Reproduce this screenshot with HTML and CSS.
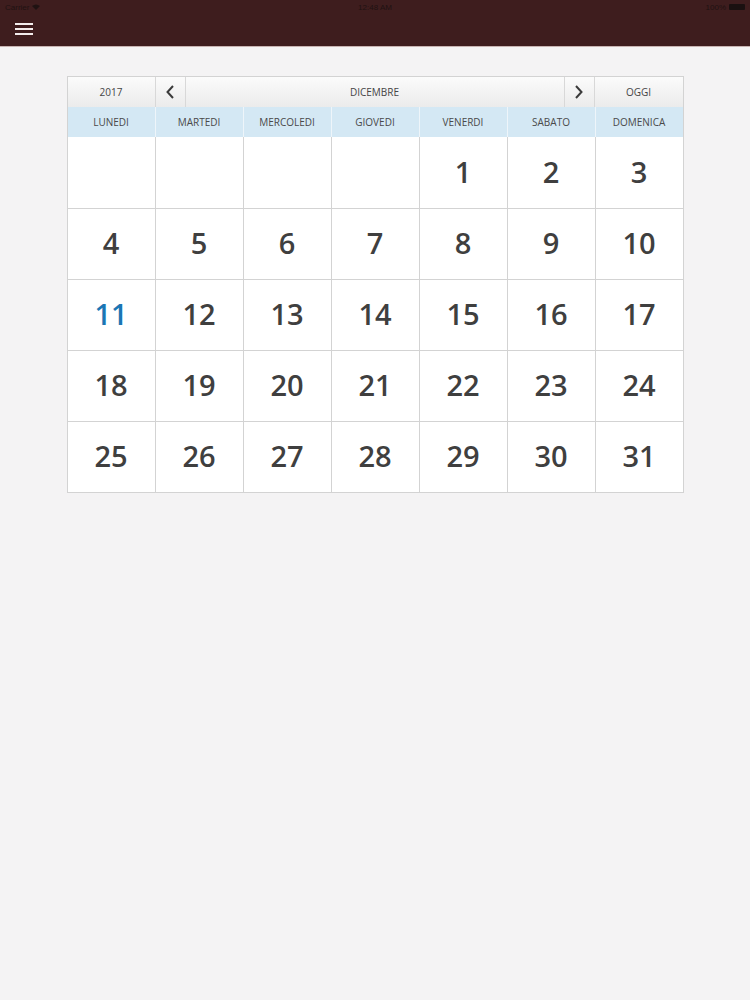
FILE: index.html
```html
<!DOCTYPE html>
<html lang="it">
<head>
<meta charset="utf-8">
<title>Calendario</title>
<link rel="stylesheet" href="styles.css">
</head>
<body>
<header class="topbar">
  <div class="status">
    <span class="carrier">Carrier <svg class="wifi" width="8" height="6" viewBox="0 0 8 6"><path d="M0 2 Q4 -1 8 2 L4 6 Z" fill="#1f1212"/></svg></span>
    <span class="time">12:48 AM</span>
    <span class="battery">100% <span class="batt"></span></span>
  </div>
  <div class="navbar">
    <button class="menu" aria-label="Menu"><span></span><span></span><span></span></button>
  </div>
</header>
<main class="page">
  <section class="calendar">
    <div class="calnav">
      <div class="cn year">2017</div>
      <div class="cn arrow"><svg width="10" height="16" viewBox="0 0 10 16"><path d="M8 2 L2.5 8 L8 14" fill="none" stroke="#3a3a3a" stroke-width="2"/></svg></div>
      <div class="cn month">DICEMBRE</div>
      <div class="cn arrow"><svg width="10" height="16" viewBox="0 0 10 16"><path d="M2 2 L7.5 8 L2 14" fill="none" stroke="#3a3a3a" stroke-width="2"/></svg></div>
      <div class="cn today-btn">OGGI</div>
    </div>
    <div class="grid">
      <div class="wd">LUNEDI</div>
      <div class="wd">MARTEDI</div>
      <div class="wd">MERCOLEDI</div>
      <div class="wd">GIOVEDI</div>
      <div class="wd">VENERDI</div>
      <div class="wd">SABATO</div>
      <div class="wd">DOMENICA</div>

      <div class="day"></div>
      <div class="day"></div>
      <div class="day"></div>
      <div class="day"></div>
      <div class="day">1</div>
      <div class="day">2</div>
      <div class="day">3</div>

      <div class="day">4</div>
      <div class="day">5</div>
      <div class="day">6</div>
      <div class="day">7</div>
      <div class="day">8</div>
      <div class="day">9</div>
      <div class="day">10</div>

      <div class="day current">11</div>
      <div class="day">12</div>
      <div class="day">13</div>
      <div class="day">14</div>
      <div class="day">15</div>
      <div class="day">16</div>
      <div class="day">17</div>

      <div class="day">18</div>
      <div class="day">19</div>
      <div class="day">20</div>
      <div class="day">21</div>
      <div class="day">22</div>
      <div class="day">23</div>
      <div class="day">24</div>

      <div class="day">25</div>
      <div class="day">26</div>
      <div class="day">27</div>
      <div class="day">28</div>
      <div class="day">29</div>
      <div class="day">30</div>
      <div class="day">31</div>
    </div>
  </section>
</main>
</body>
</html>
```
FILE: styles.css
```css
* { box-sizing: border-box; }
html, body { margin: 0; padding: 0; }
body {
  background: #f4f3f4;
  font-family: "Open Sans", "Noto Sans", sans-serif;
  color: #3c3c3c;
  min-height: 1000px;
}
.topbar {
  background: #3e1d1e;
  height: 47px;
  border-bottom: 1px solid #c8b4b2;
}
.status {
  height: 14px;
  display: flex;
  align-items: center;
  justify-content: space-between;
  padding: 0 5px;
  font-family: "Liberation Sans", sans-serif;
  font-size: 8px;
  color: #1f1212;
  position: relative;
}
.carrier { display: flex; align-items: center; gap: 3px; }
.time { position: absolute; left: 0; right: 0; text-align: center; }
.battery { display: flex; align-items: center; gap: 3px; }
.batt { width: 16px; height: 6px; background: #1a1010; border-radius: 1px; }
.navbar {
  height: 32px;
  display: flex;
  align-items: center;
  padding-left: 15px;
}
.menu {
  background: none;
  border: 0;
  padding: 0;
  width: 18px;
  height: 12px;
  display: flex;
  flex-direction: column;
  justify-content: space-between;
  margin-top: -2px;
}
.menu span { display: block; height: 2px; background: #f3ecec; }
.page { padding-top: 29px; }
.calendar {
  width: 617px;
  margin: 0 auto;
  border: 1px solid #d3d3d3;
  background: #fff;
}
.calnav {
  display: flex;
  height: 30px;
  background: linear-gradient(#fbfbfb, #ebebeb);
}
.cn {
  display: flex;
  align-items: center;
  justify-content: center;
  font-size: 10px;
  color: #454545;
  border-right: 1px solid #d8d8d8;
}
.cn:last-child { border-right: 0; }
.year, .today-btn { width: 88px; }
.arrow { width: 30px; }
.month { flex: 1; }
.grid {
  display: grid;
  grid-template-columns: repeat(6, 88px) 87px;
  grid-template-rows: 30px;
  grid-auto-rows: 71px;
}
.grid .wd {
  background: #d4e8f4;
  display: flex;
  align-items: center;
  justify-content: center;
  font-size: 10px;
  color: #4a4a4a;
  border-right: 1px solid #eef5fa;
}
.day {
  display: flex;
  align-items: center;
  justify-content: center;
  padding-bottom: 3px;
  font-size: 29px;
  font-weight: 600;
  color: #3f3f3f;
  border-right: 1px solid #d3d3d3;
  border-top: 1px solid #d3d3d3;
}
.wd:nth-child(7n), .day:nth-child(7n) { border-right: 0; }
.grid .day:nth-child(-n+14) { border-top: 0; }
.day.current { color: #1b76b4; }
```
